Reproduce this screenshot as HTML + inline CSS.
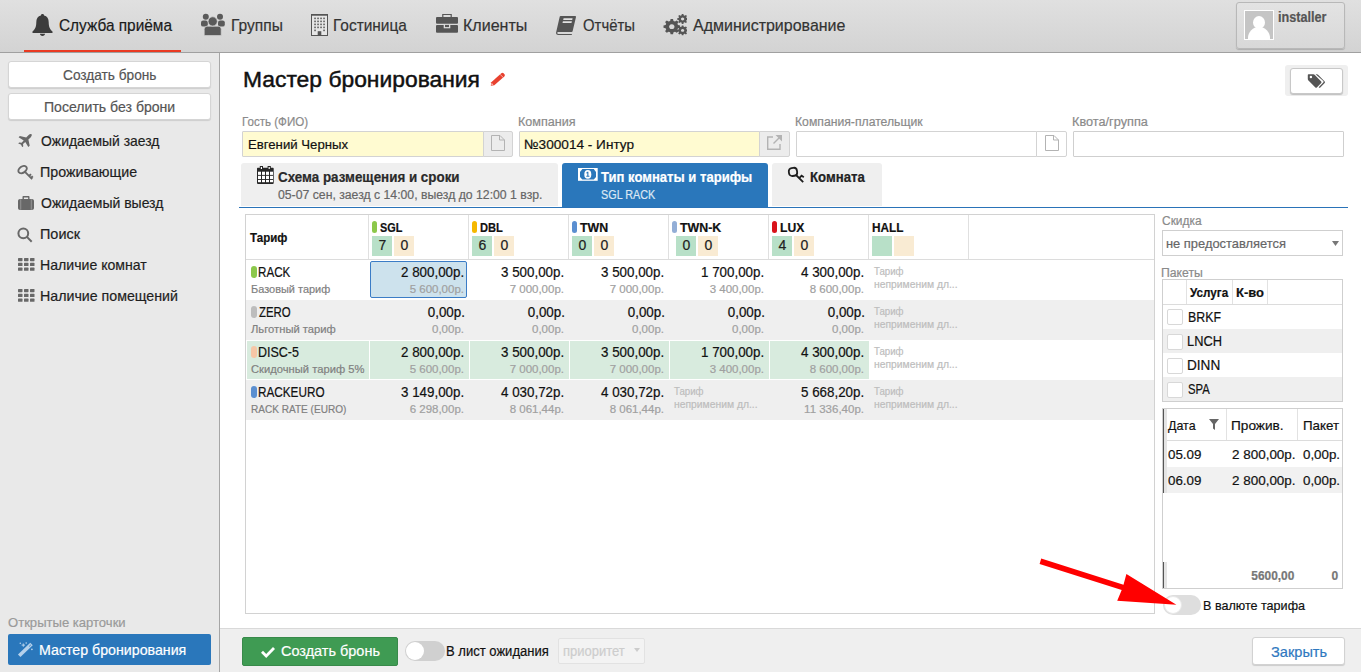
<!DOCTYPE html>
<html><head><meta charset="utf-8">
<style>
*{box-sizing:border-box;margin:0;padding:0}
html,body{width:1361px;height:672px;overflow:hidden;background:#fff;font-family:"Liberation Sans",sans-serif;color:#222}
.a{position:absolute}
.t{position:absolute;white-space:nowrap;-webkit-text-stroke:0.2px currentColor}
</style></head><body>
<div class="a" style="left:0px;top:0px;width:1361px;height:53px;background:linear-gradient(#e0e0e0,#d3d3d3);border-bottom:1px solid #a0a0a0"></div>
<div class="a" style="left:24px;top:50px;width:157px;height:2px;background:#ea3a22"></div>
<svg class="a" style="left:32px;top:14px" width="21" height="22" viewBox="0 0 21 22"><path fill="#3c3c3c" d="M10.5 0c1 0 1.6.7 1.6 1.6 3 .7 4.6 3.2 4.6 6.6 0 5 1.6 7.4 3.8 9.3V19H.5v-1.5c2.2-1.9 3.8-4.3 3.8-9.3 0-3.4 1.6-5.9 4.6-6.6C8.9.7 9.5 0 10.5 0zM8 19.8h5c0 1.3-1.1 2.2-2.5 2.2S8 21.1 8 19.8z"/></svg>
<div class="t" style="left:58.50px;transform-origin:0 0;top:17.00px;font-size:17px;line-height:17px;color:#1a1a1a;transform:scaleX(0.9060);">Служба приёма</div>
<svg class="a" style="left:200px;top:12px" width="26" height="25" viewBox="0 0 26 25"><g fill="#5a5a5a"><circle cx="5.8" cy="4.8" r="3"/><circle cx="20" cy="4.8" r="3"/><rect x="1" y="8.4" width="6.8" height="6.2" rx="2.2"/><rect x="18" y="8.4" width="6.8" height="6.2" rx="2.2"/></g><g fill="#5a5a5a" stroke="#d6d6d6" stroke-width=".7"><path d="M4.2 23.6V17.2c0-1.7 1.3-3 3-3h11c1.7 0 3 1.3 3 3v6.4z"/><circle cx="12.7" cy="9.4" r="4.6"/></g></svg>
<div class="t" style="left:230.89px;transform-origin:0 0;top:17.00px;font-size:17px;line-height:17px;color:#333;transform:scaleX(0.9147);">Группы</div>
<svg class="a" style="left:311px;top:14px" width="17" height="22" viewBox="0 0 17 22"><rect x=".5" y=".8" width="16" height="20.7" fill="#e6e6e6" stroke="#555" stroke-width="1"/><rect x="0" y="0" width="17" height="1.6" fill="#555"/><g fill="#666"><rect x="3.2" y="3.6" width="1.7" height="1.6"/><rect x="6.2" y="3.6" width="1.7" height="1.6"/><rect x="9.2" y="3.6" width="1.7" height="1.6"/><rect x="12.2" y="3.6" width="1.7" height="1.6"/><rect x="3.2" y="6.6" width="1.7" height="1.6"/><rect x="6.2" y="6.6" width="1.7" height="1.6"/><rect x="9.2" y="6.6" width="1.7" height="1.6"/><rect x="12.2" y="6.6" width="1.7" height="1.6"/><rect x="3.2" y="9.6" width="1.7" height="1.6"/><rect x="6.2" y="9.6" width="1.7" height="1.6"/><rect x="9.2" y="9.6" width="1.7" height="1.6"/><rect x="12.2" y="9.6" width="1.7" height="1.6"/><rect x="3.2" y="12.6" width="1.7" height="1.6"/><rect x="6.2" y="12.6" width="1.7" height="1.6"/><rect x="9.2" y="12.6" width="1.7" height="1.6"/><rect x="12.2" y="12.6" width="1.7" height="1.6"/><rect x="3.2" y="15.6" width="1.7" height="1.6"/><rect x="12.2" y="15.6" width="1.7" height="1.6"/></g><rect x="6.7" y="17.2" width="3.6" height="4.3" fill="#555"/></svg>
<div class="t" style="left:333.09px;transform-origin:0 0;top:17.00px;font-size:17px;line-height:17px;color:#333;transform:scaleX(0.9082);">Гостиница</div>
<svg class="a" style="left:436px;top:14px" width="22" height="19" viewBox="0 0 22 19"><g fill="#555"><path d="M6.2 0h9.6v3.2h-1.2V1.1H7.4v2.1H6.2z"/><rect x="0" y="3" width="22" height="6.7" rx="1"/><rect x="0" y="10.9" width="22" height="7.9" rx="1"/></g><path fill="#ddd" d="M7.7 10.9h6.6v3.4H7.7z"/><path fill="#555" d="M9 10.9h4v2.2H9z"/></svg>
<div class="t" style="left:463.36px;transform-origin:0 0;top:17.00px;font-size:17px;line-height:17px;color:#333;transform:scaleX(0.9440);">Клиенты</div>
<svg class="a" style="left:556px;top:16px" width="20" height="19" viewBox="0 0 20 19"><path fill="#555" d="M4.6 0H19.2c.5 0 .9.4.8.9L16.6 15.2c-.1.5-.5.8-1 .8H2.4c-.8 0-1.3.6-1.1 1.2.1.5.6.8 1.1.8H16l-.3 1H2.2C.9 19-.2 17.9.1 16.6L3.7.8C3.8.3 4.1 0 4.6 0z"/><path fill="#e2e2e2" d="M7.6 2.2h9l-.4 1.9h-9zM6.9 5.3h9l-.4 1.7h-9z"/></svg>
<div class="t" style="left:582.60px;transform-origin:0 0;top:17.00px;font-size:17px;line-height:17px;color:#333;transform:scaleX(0.8764);">Отчёты</div>
<svg class="a" style="left:662px;top:14px" width="25" height="22" viewBox="0 0 25 24" preserveAspectRatio="none"><g fill="#555"><path d="M8.6 5.5h2.4l.5 2.1 1.5.6 1.8-1.1 1.7 1.7-1.1 1.8.6 1.5 2.1.5v2.4l-2.1.5-.6 1.5 1.1 1.8-1.7 1.7-1.8-1.1-1.5.6-.5 2.1H8.6l-.5-2.1-1.5-.6-1.8 1.1-1.7-1.7 1.1-1.8-.6-1.5L1.5 15v-2.4l2.1-.5.6-1.5-1.1-1.8 1.7-1.7 1.8 1.1 1.5-.6zm1.2 5.6a2.7 2.7 0 1 0 .01 0z"/><path d="M19.8 0h1.6l.3 1.4 1 .4 1.2-.8 1.1 1.1-.8 1.2.4 1 1.4.3v1.6l-1.4.3-.4 1 .8 1.2-1.1 1.1-1.2-.8-1 .4-.3 1.4h-1.6l-.3-1.4-1-.4-1.2.8-1.1-1.1.8-1.2-.4-1-1.4-.3V4.6l1.4-.3.4-1-.8-1.2 1.1-1.1 1.2.8 1-.4zm.8 3.8a1.6 1.6 0 1 0 .01 0z"/><path d="M19.8 12.5h1.6l.3 1.4 1 .4 1.2-.8 1.1 1.1-.8 1.2.4 1 1.4.3v1.6l-1.4.3-.4 1 .8 1.2-1.1 1.1-1.2-.8-1 .4-.3 1.4h-1.6l-.3-1.4-1-.4-1.2.8-1.1-1.1.8-1.2-.4-1-1.4-.3v-1.6l1.4-.3.4-1-.8-1.2 1.1-1.1 1.2.8 1-.4zm.8 3.8a1.6 1.6 0 1 0 .01 0z"/></g></svg>
<div class="t" style="left:693.20px;transform-origin:0 0;top:17.00px;font-size:17px;line-height:17px;color:#333;transform:scaleX(0.9403);">Администрирование</div>
<div class="a" style="left:1236px;top:2px;width:109px;height:47px;border:1px solid #b8b8b8;border-radius:3px;background:linear-gradient(#e3e3e3,#d8d8d8);box-shadow:0 1px 1px rgba(0,0,0,.18)"></div>
<div class="a" style="left:1244px;top:10px;width:30px;height:30px;background:#fff"></div>
<div class="a" style="left:1245px;top:11px;width:28px;height:28px;background:#c5c5c5;overflow:hidden"><div class="a" style="left:8px;top:5px;width:12px;height:13px;border-radius:50%;background:#fff"></div><div class="a" style="left:3px;top:16px;width:22px;height:22px;border-radius:50%;background:#fff"></div></div>
<div class="t" style="left:1277.50px;transform-origin:0 0;top:10.00px;font-size:14px;line-height:14px;font-weight:bold;color:#555;transform:scaleX(0.9034);">installer</div>
<div class="a" style="left:0px;top:53px;width:220px;height:619px;background:#e9e9e9;border-right:1px solid #a6a6a6"></div>
<div class="a" style="left:8px;top:61px;width:203px;height:27px;background:#fff;border:1px solid #d5d5d5;border-radius:3px;box-shadow:0 1px 1px rgba(0,0,0,.12)"></div>
<div class="t" style="left:62.50px;transform-origin:0 0;top:68.00px;font-size:14px;line-height:14px;color:#555;transform:scaleX(0.9768);">Создать бронь</div>
<div class="a" style="left:8px;top:93px;width:203px;height:27px;background:#fff;border:1px solid #d5d5d5;border-radius:3px;box-shadow:0 1px 1px rgba(0,0,0,.12)"></div>
<div class="t" style="left:43.59px;transform-origin:0 0;top:100.00px;font-size:14px;line-height:14px;color:#555;transform:scaleX(1.0052);">Поселить без брони</div>
<div class="t" style="left:40.50px;transform-origin:0 0;top:134.00px;font-size:14.5px;line-height:14.5px;color:#1e1e1e;transform:scaleX(0.9599);">Ожидаемый заезд</div>
<div class="t" style="left:39.52px;transform-origin:0 0;top:165.00px;font-size:14.5px;line-height:14.5px;color:#1e1e1e;transform:scaleX(0.9837);">Проживающие</div>
<div class="t" style="left:40.50px;transform-origin:0 0;top:196.00px;font-size:14.5px;line-height:14.5px;color:#1e1e1e;transform:scaleX(0.9648);">Ожидаемый выезд</div>
<div class="t" style="left:39.51px;transform-origin:0 0;top:227.00px;font-size:14.5px;line-height:14.5px;color:#1e1e1e;transform:scaleX(0.9941);">Поиск</div>
<div class="t" style="left:39.53px;transform-origin:0 0;top:258.00px;font-size:14.5px;line-height:14.5px;color:#1e1e1e;transform:scaleX(0.9731);">Наличие комнат</div>
<div class="t" style="left:39.52px;transform-origin:0 0;top:289.00px;font-size:14.5px;line-height:14.5px;color:#1e1e1e;transform:scaleX(0.9797);">Наличие помещений</div>
<svg class="a" style="left:17px;top:134px" width="15" height="13" viewBox="0 0 15 13"><path fill="#686868" d="M14.6.4c.6.6.1 1.9-1 3L11.4 5.5l1.3 6.3-1.4 1.2-3-5.1-2.3 2.1.3 2.3-1 .9-1.4-2.6L1.2 9.4l1-1 2.4.4 2.1-2.4L1.6 3.3 2.9 2l6.3 1.4 2.2-2.1c1.1-1.1 2.6-1.5 3.2-.9z"/></svg>
<svg class="a" style="left:17px;top:165px" width="17" height="16" viewBox="0 0 17 16"><g fill="none" stroke="#686868" stroke-width="1.9"><ellipse cx="5.6" cy="4.6" rx="4.6" ry="3.1" transform="rotate(-35 5.6 4.6)"/><path d="M8.2 7.2l7 7M12 11l2-1.9M14 13l1.8-1.7"/></g><path stroke="#e9e9e9" stroke-width="1.3" d="M3.4 5.8L6.6 3.5"/></svg>
<svg class="a" style="left:18px;top:196px" width="16" height="14" viewBox="0 0 16 14"><path fill="#686868" d="M5.5 0h5c.6 0 1 .4 1 1v2H14c1.1 0 2 .9 2 2v7c0 1.1-.9 2-2 2H2c-1.1 0-2-.9-2-2V5c0-1.1.9-2 2-2h2.5V1c0-.6.4-1 1-1zm.4 1.4V3h4.2V1.4z"/><path fill="#9a9a9a" d="M2.3 3.3h.9v10.4h-.9zM12.8 3.3h.9v10.4h-.9z"/></svg>
<svg class="a" style="left:17px;top:227px" width="16" height="16" viewBox="0 0 16 16"><g fill="none" stroke="#686868" stroke-width="2"><circle cx="6.3" cy="6.3" r="4.9"/><path d="M9.9 9.9l4.8 4.8"/></g></svg>
<svg class="a" style="left:18px;top:258px" width="17" height="13" viewBox="0 0 17 13"><g fill="#686868"><rect x="0" y="0.0" width="4.5" height="3.2" rx=".6"/><rect x="6" y="0.0" width="4.5" height="3.2" rx=".6"/><rect x="12" y="0.0" width="4.5" height="3.2" rx=".6"/><rect x="0" y="4.8" width="4.5" height="3.2" rx=".6"/><rect x="6" y="4.8" width="4.5" height="3.2" rx=".6"/><rect x="12" y="4.8" width="4.5" height="3.2" rx=".6"/><rect x="0" y="9.6" width="4.5" height="3.2" rx=".6"/><rect x="6" y="9.6" width="4.5" height="3.2" rx=".6"/><rect x="12" y="9.6" width="4.5" height="3.2" rx=".6"/></g></svg>
<svg class="a" style="left:18px;top:289px" width="17" height="13" viewBox="0 0 17 13"><g fill="#686868"><rect x="0" y="0.0" width="4.5" height="3.2" rx=".6"/><rect x="6" y="0.0" width="4.5" height="3.2" rx=".6"/><rect x="12" y="0.0" width="4.5" height="3.2" rx=".6"/><rect x="0" y="4.8" width="4.5" height="3.2" rx=".6"/><rect x="6" y="4.8" width="4.5" height="3.2" rx=".6"/><rect x="12" y="4.8" width="4.5" height="3.2" rx=".6"/><rect x="0" y="9.6" width="4.5" height="3.2" rx=".6"/><rect x="6" y="9.6" width="4.5" height="3.2" rx=".6"/><rect x="12" y="9.6" width="4.5" height="3.2" rx=".6"/></g></svg>
<div class="t" style="left:8.30px;transform-origin:0 0;top:616.00px;font-size:13px;line-height:13px;color:#9a9a9a;transform:scaleX(1.0049);">Открытые карточки</div>
<div class="a" style="left:8px;top:634px;width:203px;height:31px;background:#2a77bb;border-radius:2px"></div>
<svg class="a" style="left:14px;top:638px" width="22" height="22" viewBox="0 0 22 22"><path stroke="#b5d1eb" stroke-width="3.6" d="M5.2 17.7L17.5 6"/><path stroke="#2a77bb" stroke-width="1" d="M15.3 8.3l1.4-1.3"/><g fill="#b5d1eb"><path d="M8.8 5.4h1v3.4h-1z"/><path d="M7.6 6.6h3.4v1H7.6z"/><circle cx="6.3" cy="5.3" r=".8"/><circle cx="12.2" cy="5" r=".8"/><circle cx="17.9" cy="11.3" r=".9"/></g></svg>
<div class="t" style="left:39.32px;transform-origin:0 0;top:643.00px;font-size:14.5px;line-height:14.5px;color:#fff;transform:scaleX(0.9793);">Мастер бронирования</div>
<div class="t" style="left:242.66px;transform-origin:0 0;top:69.00px;font-size:22px;line-height:22px;color:#111;transform:scaleX(1.0384);-webkit-text-stroke:0.45px #111;">Мастер бронирования</div>
<svg class="a" style="left:489px;top:72px" width="17" height="15" viewBox="0 0 17 15"><path fill="#e8412f" d="M1.8 13.8L2.3 10.3 12.3 1.2Q13.5.2 14.6 1.3L15.6 2.6Q16.3 3.7 15.3 4.6L5.3 13.3Z"/><path stroke="#f7c9c2" stroke-width=".8" d="M11.1 2.4l3.2 3.1"/><path fill="#fbe3df" d="M2.4 12.9l.3-1.8 1.6 1.4z"/></svg>
<div class="a" style="left:1285px;top:65px;width:63px;height:31px;background:#efefef;border-radius:3px"></div>
<div class="a" style="left:1290px;top:68px;width:53px;height:26px;background:#fff;border:1px solid #c8c8c8;border-radius:3px;box-shadow:0 1px 1px rgba(0,0,0,.2)"></div>
<svg class="a" style="left:1307px;top:73px" width="19" height="16" viewBox="0 0 19 16"><path fill="#555" d="M1.8 1.2h4.6c.5 0 .9.2 1.2.5l6.6 6.8c.4.4.4 1 0 1.4l-4.4 4.6c-.4.4-1 .4-1.4 0L1.2 7.2C.9 6.9.8 6.5.8 6.1V2.2c0-.6.4-1 1-1z"/><circle cx="3.9" cy="4" r="1.2" fill="#fff"/><path fill="#555" d="M8.6 1.2h1.3c.5 0 .9.2 1.2.5l6.6 6.8c.4.4.4 1 0 1.4l-4.4 4.6c-.4.4-1 .4-1.4 0l-.2-.2 4.6-4.8c.4-.4.4-1 0-1.4z"/></svg>
<div class="t" style="left:241.67px;transform-origin:0 0;top:116.00px;font-size:12.5px;line-height:12.5px;color:#8a8a8a;transform:scaleX(0.9257);">Гость (ФИО)</div>
<div class="t" style="left:518.19px;transform-origin:0 0;top:116.00px;font-size:12.5px;line-height:12.5px;color:#8a8a8a;transform:scaleX(1.0066);">Компания</div>
<div class="t" style="left:795.22px;transform-origin:0 0;top:116.00px;font-size:12.5px;line-height:12.5px;color:#8a8a8a;transform:scaleX(0.9762);">Компания-плательщик</div>
<div class="t" style="left:1072.28px;transform-origin:0 0;top:116.00px;font-size:12.5px;line-height:12.5px;color:#8a8a8a;transform:scaleX(1.0173);">Квота/группа</div>
<div class="a" style="left:242px;top:131px;width:242px;height:26px;background:#fffbd1;border:1px solid #d3d3d3;border-radius:1px"></div>
<div class="a" style="left:483px;top:131px;width:30px;height:26px;background:#ececec;border:1px solid #d3d3d3;border-radius:0 2px 2px 0"></div>
<div class="a" style="left:519px;top:131px;width:241px;height:26px;background:#fffbd1;border:1px solid #d3d3d3;border-radius:1px"></div>
<div class="a" style="left:759px;top:131px;width:31px;height:26px;background:#ececec;border:1px solid #d3d3d3;border-radius:0 2px 2px 0"></div>
<div class="a" style="left:796px;top:131px;width:241px;height:26px;background:#fff;border:1px solid #d3d3d3;border-radius:1px"></div>
<div class="a" style="left:1036px;top:131px;width:31px;height:26px;background:#fff;border:1px solid #d3d3d3;border-radius:0 2px 2px 0"></div>
<div class="a" style="left:1073px;top:131px;width:271px;height:26px;background:#fff;border:1px solid #cfcfcf;border-radius:1px"></div>
<div class="t" style="left:247.72px;transform-origin:0 0;top:138.00px;font-size:13.5px;line-height:13.5px;color:#111;transform:scaleX(0.9757);">Евгений Черных</div>
<div class="t" style="left:524.49px;transform-origin:0 0;top:138.00px;font-size:13.5px;line-height:13.5px;color:#111;transform:scaleX(1.0082);">№300014 - Интур</div>
<svg class="a" style="left:491px;top:135px" width="14" height="16" viewBox="0 0 14 16"><path fill="none" stroke="#b3b3b3" stroke-width="1" d="M.5.5h8.5l4.5 4.5v10.5H.5z M8.5.5v4.5h5"/></svg>
<svg class="a" style="left:1045px;top:135px" width="14" height="16" viewBox="0 0 14 16"><path fill="none" stroke="#b3b3b3" stroke-width="1" d="M.5.5h8.5l4.5 4.5v10.5H.5z M8.5.5v4.5h5"/></svg>
<svg class="a" style="left:766px;top:134px" width="17" height="17" viewBox="0 0 17 17"><g fill="none" stroke="#b3b3b3" stroke-width="1.4"><path d="M7 3H1.7v12.3H14V10"/><path d="M14.5 2.5L7.5 9.5"/></g><path fill="#b3b3b3" d="M9.5 1h6.5v6.5z"/></svg>
<div class="a" style="left:241px;top:163px;width:317px;height:43px;background:#efefef;border-radius:3px 3px 0 0"></div>
<div class="a" style="left:562px;top:163px;width:206px;height:44px;background:#2a77bb;border-radius:3px 3px 0 0"></div>
<div class="a" style="left:772px;top:163px;width:110px;height:43px;background:#efefef;border-radius:3px 3px 0 0"></div>
<div class="a" style="left:239px;top:207px;width:1109px;height:1px;background:#2a73b8"></div>
<svg class="a" style="left:257px;top:166px" width="17" height="18" viewBox="0 0 17 18"><path fill="#262626" d="M2.8 0h3.2v1.8h4.6V0h3.2v1.8h1.9c.6 0 1 .4 1 1V17c0 .6-.4.9-1 .9H1c-.6 0-1-.3-1-.9V2.8c0-.6.4-1 1-1h1.8z"/><g fill="#fff"><rect x="1" y="5.7" width="3" height="3.2"/><rect x="5" y="5.7" width="3" height="3.2"/><rect x="9" y="5.7" width="3" height="3.2"/><rect x="13" y="5.7" width="3" height="3.2"/><rect x="1" y="9.8" width="3" height="3.2"/><rect x="5" y="9.8" width="3" height="3.2"/><rect x="9" y="9.8" width="3" height="3.2"/><rect x="13" y="9.8" width="3" height="3.2"/><rect x="1" y="13.9" width="3" height="2.3"/><rect x="5" y="13.9" width="3" height="2.3"/><rect x="9" y="13.9" width="3" height="2.3"/><rect x="13" y="13.9" width="3" height="2.3"/><rect x="3.8" y="1" width="1.2" height="2"/><rect x="11.6" y="1" width="1.2" height="2"/></g></svg>
<div class="t" style="left:278.00px;transform-origin:0 0;top:170.00px;font-size:14px;line-height:14px;font-weight:bold;color:#2a2a2a;transform:scaleX(0.9558);">Схема размещения и сроки</div>
<div class="t" style="left:278.00px;transform-origin:0 0;top:189.00px;font-size:12.5px;line-height:12.5px;color:#666;transform:scaleX(0.9791);">05-07 сен, заезд с 14:00, выезд до 12:00 1 взр.</div>
<svg class="a" style="left:578px;top:168px" width="20" height="13" viewBox="0 0 20 13"><rect width="19.7" height="12.8" fill="#fff"/><path fill="#2a77bb" d="M4.3 1.1h11.5L18 3.9v5L15.8 11.6H4.3L2 8.9v-5z"/><ellipse cx="9.8" cy="6.4" rx="3.5" ry="4.4" fill="#fff"/><path fill="#2a77bb" d="M9.3 3.8h1.1v4h1v.9H8.3v-.9h1v-2.6l-.8.4-.3-.8z"/></svg>
<div class="t" style="left:601.40px;transform-origin:0 0;top:170.00px;font-size:14px;line-height:14px;font-weight:bold;color:#fff;transform:scaleX(0.9341);">Тип комнаты и тарифы</div>
<div class="t" style="left:601.40px;transform-origin:0 0;top:189.00px;font-size:12.5px;line-height:12.5px;color:#dce8f4;transform:scaleX(0.8657);">SGL RACK</div>
<svg class="a" style="left:787px;top:166px" width="18" height="18" viewBox="0 0 18 18"><g fill="none" stroke="#1e1e1e" stroke-width="1.8"><rect x="1.9" y="1.9" width="8.2" height="8" rx="3.2" transform="rotate(-8 6 6)"/><path d="M9 9l7.2 7.2M12.2 12.2l2.4-2.6 2.2 1.6"/></g></svg>
<div class="t" style="left:810.00px;transform-origin:0 0;top:170.00px;font-size:14px;line-height:14px;font-weight:bold;color:#222;transform:scaleX(0.9423);">Комната</div>
<div class="a" style="left:245px;top:214px;width:910px;height:400px;border:1px solid #d2d2d2;background:#fff"></div>
<div class="a" style="left:246px;top:259px;width:908px;height:1px;background:#dcdcdc"></div>
<div class="a" style="left:368px;top:215px;width:1px;height:44px;background:#e0e0e0"></div>
<div class="a" style="left:468px;top:215px;width:1px;height:44px;background:#e0e0e0"></div>
<div class="a" style="left:568px;top:215px;width:1px;height:44px;background:#e0e0e0"></div>
<div class="a" style="left:668px;top:215px;width:1px;height:44px;background:#e0e0e0"></div>
<div class="a" style="left:768px;top:215px;width:1px;height:44px;background:#e0e0e0"></div>
<div class="a" style="left:868px;top:215px;width:1px;height:44px;background:#e0e0e0"></div>
<div class="a" style="left:968px;top:215px;width:1px;height:44px;background:#e0e0e0"></div>
<div class="t" style="left:249.70px;transform-origin:0 0;top:231.00px;font-size:13px;line-height:13px;font-weight:bold;color:#111;transform:scaleX(0.8856);">Тариф</div>
<div class="a" style="left:372px;top:221px;width:5px;height:12px;background:#8cc84b;border-radius:2.5px"></div>
<div class="t" style="left:380.00px;transform-origin:0 0;top:221.00px;font-size:13px;line-height:13px;font-weight:bold;color:#111;transform:scaleX(0.8364);">SGL</div>
<div class="a" style="left:372px;top:236px;width:20px;height:20px;background:#b8e0c8"></div>
<div class="a" style="left:394px;top:236px;width:20px;height:20px;background:#f9ebd3"></div>
<div class="t" style="left:378.50px;transform-origin:0 0;top:238.00px;font-size:14px;line-height:14px;color:#222;">7</div>
<div class="t" style="left:400.50px;transform-origin:0 0;top:238.00px;font-size:14px;line-height:14px;color:#222;">0</div>
<div class="a" style="left:472px;top:221px;width:5px;height:12px;background:#f5b800;border-radius:2.5px"></div>
<div class="t" style="left:480.00px;transform-origin:0 0;top:221.00px;font-size:13px;line-height:13px;font-weight:bold;color:#111;transform:scaleX(0.8552);">DBL</div>
<div class="a" style="left:472px;top:236px;width:20px;height:20px;background:#b8e0c8"></div>
<div class="a" style="left:494px;top:236px;width:20px;height:20px;background:#f9ebd3"></div>
<div class="t" style="left:478.50px;transform-origin:0 0;top:238.00px;font-size:14px;line-height:14px;color:#222;">6</div>
<div class="t" style="left:500.50px;transform-origin:0 0;top:238.00px;font-size:14px;line-height:14px;color:#222;">0</div>
<div class="a" style="left:572px;top:221px;width:5px;height:12px;background:#5b8fd0;border-radius:2.5px"></div>
<div class="t" style="left:580.00px;transform-origin:0 0;top:221.00px;font-size:13px;line-height:13px;font-weight:bold;color:#111;transform:scaleX(0.9517);">TWN</div>
<div class="a" style="left:572px;top:236px;width:20px;height:20px;background:#b8e0c8"></div>
<div class="a" style="left:594px;top:236px;width:20px;height:20px;background:#f9ebd3"></div>
<div class="t" style="left:578.50px;transform-origin:0 0;top:238.00px;font-size:14px;line-height:14px;color:#222;">0</div>
<div class="t" style="left:600.50px;transform-origin:0 0;top:238.00px;font-size:14px;line-height:14px;color:#222;">0</div>
<div class="a" style="left:672px;top:221px;width:5px;height:12px;background:#93aed6;border-radius:2.5px"></div>
<div class="t" style="left:680.00px;transform-origin:0 0;top:221.00px;font-size:13px;line-height:13px;font-weight:bold;color:#111;transform:scaleX(0.9538);">TWN-K</div>
<div class="a" style="left:676px;top:236px;width:20px;height:20px;background:#b8e0c8"></div>
<div class="a" style="left:698px;top:236px;width:20px;height:20px;background:#f9ebd3"></div>
<div class="t" style="left:682.50px;transform-origin:0 0;top:238.00px;font-size:14px;line-height:14px;color:#222;">0</div>
<div class="t" style="left:704.50px;transform-origin:0 0;top:238.00px;font-size:14px;line-height:14px;color:#222;">0</div>
<div class="a" style="left:772px;top:221px;width:5px;height:12px;background:#d9131b;border-radius:2.5px"></div>
<div class="t" style="left:780.00px;transform-origin:0 0;top:221.00px;font-size:13px;line-height:13px;font-weight:bold;color:#111;transform:scaleX(0.9343);">LUX</div>
<div class="a" style="left:772px;top:236px;width:20px;height:20px;background:#b8e0c8"></div>
<div class="a" style="left:794px;top:236px;width:20px;height:20px;background:#f9ebd3"></div>
<div class="t" style="left:778.50px;transform-origin:0 0;top:238.00px;font-size:14px;line-height:14px;color:#222;">4</div>
<div class="t" style="left:800.50px;transform-origin:0 0;top:238.00px;font-size:14px;line-height:14px;color:#222;">0</div>
<div class="t" style="left:872.30px;transform-origin:0 0;top:221.00px;font-size:13px;line-height:13px;font-weight:bold;color:#111;transform:scaleX(0.9073);">HALL</div>
<div class="a" style="left:872px;top:236px;width:20px;height:20px;background:#b8e0c8"></div>
<div class="a" style="left:894px;top:236px;width:20px;height:20px;background:#f9ebd3"></div>
<div class="a" style="left:246px;top:300px;width:908px;height:40px;background:#efefef"></div>
<div class="a" style="left:246px;top:380px;width:908px;height:40px;background:#efefef"></div>
<div class="a" style="left:247px;top:341px;width:122px;height:38px;background:#d8ebde"></div>
<div class="a" style="left:370px;top:341px;width:99px;height:38px;background:#d8ebde"></div>
<div class="a" style="left:470px;top:341px;width:99px;height:38px;background:#d8ebde"></div>
<div class="a" style="left:570px;top:341px;width:99px;height:38px;background:#d8ebde"></div>
<div class="a" style="left:670px;top:341px;width:99px;height:38px;background:#d8ebde"></div>
<div class="a" style="left:770px;top:341px;width:99px;height:38px;background:#d8ebde"></div>
<div class="a" style="left:370px;top:261px;width:97px;height:37px;background:#cde2ed;border:1px solid #3b7cc6;border-radius:2px"></div>
<div class="a" style="left:251px;top:266px;width:6px;height:12px;background:#8cc84b;border-radius:3px"></div>
<div class="t" style="left:258.37px;transform-origin:0 0;top:265.00px;font-size:14px;line-height:14px;color:#111;transform:scaleX(0.8299);">RACK</div>
<div class="t" style="left:251.20px;transform-origin:0 0;top:284.00px;font-size:11.5px;line-height:11.5px;color:#808080;transform:scaleX(0.9528);">Базовый тариф</div>
<div class="t" style="right:896.35px;text-align:right;transform-origin:100% 0;top:265.00px;font-size:14px;line-height:14px;color:#111;transform:scaleX(0.9541);">2 800,00р.</div>
<div class="t" style="right:897.00px;text-align:right;transform-origin:100% 0;top:284.00px;font-size:11.5px;line-height:11.5px;color:#a0a0a0;">5 600,00р.</div>
<div class="t" style="right:796.35px;text-align:right;transform-origin:100% 0;top:265.00px;font-size:14px;line-height:14px;color:#111;transform:scaleX(0.9541);">3 500,00р.</div>
<div class="t" style="right:797.00px;text-align:right;transform-origin:100% 0;top:284.00px;font-size:11.5px;line-height:11.5px;color:#a0a0a0;">7 000,00р.</div>
<div class="t" style="right:696.35px;text-align:right;transform-origin:100% 0;top:265.00px;font-size:14px;line-height:14px;color:#111;transform:scaleX(0.9541);">3 500,00р.</div>
<div class="t" style="right:697.00px;text-align:right;transform-origin:100% 0;top:284.00px;font-size:11.5px;line-height:11.5px;color:#a0a0a0;">7 000,00р.</div>
<div class="t" style="right:596.35px;text-align:right;transform-origin:100% 0;top:265.00px;font-size:14px;line-height:14px;color:#111;transform:scaleX(0.9541);">1 700,00р.</div>
<div class="t" style="right:597.00px;text-align:right;transform-origin:100% 0;top:284.00px;font-size:11.5px;line-height:11.5px;color:#a0a0a0;">3 400,00р.</div>
<div class="t" style="right:496.35px;text-align:right;transform-origin:100% 0;top:265.00px;font-size:14px;line-height:14px;color:#111;transform:scaleX(0.9541);">4 300,00р.</div>
<div class="t" style="right:497.00px;text-align:right;transform-origin:100% 0;top:284.00px;font-size:11.5px;line-height:11.5px;color:#a0a0a0;">8 600,00р.</div>
<div class="t" style="left:874.30px;transform-origin:0 0;top:266.00px;font-size:11px;line-height:11px;color:#bdbdbd;transform:scaleX(0.8778);">Тариф</div>
<div class="t" style="left:874.30px;transform-origin:0 0;top:279.00px;font-size:11px;line-height:11px;color:#bdbdbd;transform:scaleX(0.9395);">неприменим дл...</div>
<div class="a" style="left:251px;top:306px;width:6px;height:12px;background:#bdbdbd;border-radius:3px"></div>
<div class="t" style="left:259.20px;transform-origin:0 0;top:305.00px;font-size:14px;line-height:14px;color:#111;transform:scaleX(0.8154);">ZERO</div>
<div class="t" style="left:251.20px;transform-origin:0 0;top:324.00px;font-size:11.5px;line-height:11.5px;color:#808080;transform:scaleX(0.9760);">Льготный тариф</div>
<div class="t" style="right:896.35px;text-align:right;transform-origin:100% 0;top:305.00px;font-size:14px;line-height:14px;color:#111;transform:scaleX(0.9541);">0,00р.</div>
<div class="t" style="right:897.00px;text-align:right;transform-origin:100% 0;top:324.00px;font-size:11.5px;line-height:11.5px;color:#a0a0a0;">0,00р.</div>
<div class="t" style="right:796.35px;text-align:right;transform-origin:100% 0;top:305.00px;font-size:14px;line-height:14px;color:#111;transform:scaleX(0.9541);">0,00р.</div>
<div class="t" style="right:797.00px;text-align:right;transform-origin:100% 0;top:324.00px;font-size:11.5px;line-height:11.5px;color:#a0a0a0;">0,00р.</div>
<div class="t" style="right:696.35px;text-align:right;transform-origin:100% 0;top:305.00px;font-size:14px;line-height:14px;color:#111;transform:scaleX(0.9541);">0,00р.</div>
<div class="t" style="right:697.00px;text-align:right;transform-origin:100% 0;top:324.00px;font-size:11.5px;line-height:11.5px;color:#a0a0a0;">0,00р.</div>
<div class="t" style="right:596.35px;text-align:right;transform-origin:100% 0;top:305.00px;font-size:14px;line-height:14px;color:#111;transform:scaleX(0.9541);">0,00р.</div>
<div class="t" style="right:597.00px;text-align:right;transform-origin:100% 0;top:324.00px;font-size:11.5px;line-height:11.5px;color:#a0a0a0;">0,00р.</div>
<div class="t" style="right:496.35px;text-align:right;transform-origin:100% 0;top:305.00px;font-size:14px;line-height:14px;color:#111;transform:scaleX(0.9541);">0,00р.</div>
<div class="t" style="right:497.00px;text-align:right;transform-origin:100% 0;top:324.00px;font-size:11.5px;line-height:11.5px;color:#a0a0a0;">0,00р.</div>
<div class="t" style="left:874.30px;transform-origin:0 0;top:306.00px;font-size:11px;line-height:11px;color:#bdbdbd;transform:scaleX(0.8778);">Тариф</div>
<div class="t" style="left:874.30px;transform-origin:0 0;top:319.00px;font-size:11px;line-height:11px;color:#bdbdbd;transform:scaleX(0.9395);">неприменим дл...</div>
<div class="a" style="left:251px;top:346px;width:6px;height:12px;background:#f6c6a6;border-radius:3px"></div>
<div class="t" style="left:258.31px;transform-origin:0 0;top:345.00px;font-size:14px;line-height:14px;color:#111;transform:scaleX(0.8911);">DISC-5</div>
<div class="t" style="left:251.20px;transform-origin:0 0;top:364.00px;font-size:11.5px;line-height:11.5px;color:#808080;transform:scaleX(0.9738);">Скидочный тариф 5%</div>
<div class="t" style="right:896.35px;text-align:right;transform-origin:100% 0;top:345.00px;font-size:14px;line-height:14px;color:#111;transform:scaleX(0.9541);">2 800,00р.</div>
<div class="t" style="right:897.00px;text-align:right;transform-origin:100% 0;top:364.00px;font-size:11.5px;line-height:11.5px;color:#a0a0a0;">5 600,00р.</div>
<div class="t" style="right:796.35px;text-align:right;transform-origin:100% 0;top:345.00px;font-size:14px;line-height:14px;color:#111;transform:scaleX(0.9541);">3 500,00р.</div>
<div class="t" style="right:797.00px;text-align:right;transform-origin:100% 0;top:364.00px;font-size:11.5px;line-height:11.5px;color:#a0a0a0;">7 000,00р.</div>
<div class="t" style="right:696.35px;text-align:right;transform-origin:100% 0;top:345.00px;font-size:14px;line-height:14px;color:#111;transform:scaleX(0.9541);">3 500,00р.</div>
<div class="t" style="right:697.00px;text-align:right;transform-origin:100% 0;top:364.00px;font-size:11.5px;line-height:11.5px;color:#a0a0a0;">7 000,00р.</div>
<div class="t" style="right:596.35px;text-align:right;transform-origin:100% 0;top:345.00px;font-size:14px;line-height:14px;color:#111;transform:scaleX(0.9541);">1 700,00р.</div>
<div class="t" style="right:597.00px;text-align:right;transform-origin:100% 0;top:364.00px;font-size:11.5px;line-height:11.5px;color:#a0a0a0;">3 400,00р.</div>
<div class="t" style="right:496.35px;text-align:right;transform-origin:100% 0;top:345.00px;font-size:14px;line-height:14px;color:#111;transform:scaleX(0.9541);">4 300,00р.</div>
<div class="t" style="right:497.00px;text-align:right;transform-origin:100% 0;top:364.00px;font-size:11.5px;line-height:11.5px;color:#a0a0a0;">8 600,00р.</div>
<div class="t" style="left:874.30px;transform-origin:0 0;top:346.00px;font-size:11px;line-height:11px;color:#bdbdbd;transform:scaleX(0.8778);">Тариф</div>
<div class="t" style="left:874.30px;transform-origin:0 0;top:359.00px;font-size:11px;line-height:11px;color:#bdbdbd;transform:scaleX(0.9395);">неприменим дл...</div>
<div class="a" style="left:251px;top:386px;width:6px;height:12px;background:#5b8fd0;border-radius:3px"></div>
<div class="t" style="left:258.36px;transform-origin:0 0;top:385.00px;font-size:14px;line-height:14px;color:#111;transform:scaleX(0.8387);">RACKEURO</div>
<div class="t" style="left:251.20px;transform-origin:0 0;top:404.00px;font-size:11.5px;line-height:11.5px;color:#808080;transform:scaleX(0.8744);">RACK RATE (EURO)</div>
<div class="t" style="right:896.35px;text-align:right;transform-origin:100% 0;top:385.00px;font-size:14px;line-height:14px;color:#111;transform:scaleX(0.9541);">3 149,00р.</div>
<div class="t" style="right:897.00px;text-align:right;transform-origin:100% 0;top:404.00px;font-size:11.5px;line-height:11.5px;color:#a0a0a0;">6 298,00р.</div>
<div class="t" style="right:796.35px;text-align:right;transform-origin:100% 0;top:385.00px;font-size:14px;line-height:14px;color:#111;transform:scaleX(0.9541);">4 030,72р.</div>
<div class="t" style="right:797.00px;text-align:right;transform-origin:100% 0;top:404.00px;font-size:11.5px;line-height:11.5px;color:#a0a0a0;">8 061,44р.</div>
<div class="t" style="right:696.35px;text-align:right;transform-origin:100% 0;top:385.00px;font-size:14px;line-height:14px;color:#111;transform:scaleX(0.9541);">4 030,72р.</div>
<div class="t" style="right:697.00px;text-align:right;transform-origin:100% 0;top:404.00px;font-size:11.5px;line-height:11.5px;color:#a0a0a0;">8 061,44р.</div>
<div class="t" style="left:674.30px;transform-origin:0 0;top:386.00px;font-size:11px;line-height:11px;color:#bdbdbd;transform:scaleX(0.8778);">Тариф</div>
<div class="t" style="left:674.30px;transform-origin:0 0;top:399.00px;font-size:11px;line-height:11px;color:#bdbdbd;transform:scaleX(0.9395);">неприменим дл...</div>
<div class="t" style="right:496.35px;text-align:right;transform-origin:100% 0;top:385.00px;font-size:14px;line-height:14px;color:#111;transform:scaleX(0.9541);">5 668,20р.</div>
<div class="t" style="right:497.00px;text-align:right;transform-origin:100% 0;top:404.00px;font-size:11.5px;line-height:11.5px;color:#a0a0a0;">11 336,40р.</div>
<div class="t" style="left:874.30px;transform-origin:0 0;top:386.00px;font-size:11px;line-height:11px;color:#bdbdbd;transform:scaleX(0.8778);">Тариф</div>
<div class="t" style="left:874.30px;transform-origin:0 0;top:399.00px;font-size:11px;line-height:11px;color:#bdbdbd;transform:scaleX(0.9395);">неприменим дл...</div>
<div class="t" style="left:1162.30px;transform-origin:0 0;top:215.00px;font-size:12.5px;line-height:12.5px;color:#8a8a8a;transform:scaleX(0.9563);">Скидка</div>
<div class="a" style="left:1162px;top:230px;width:181px;height:26px;border:1px solid #cfcfcf;background:#fff"></div>
<div class="t" style="left:1166.00px;transform-origin:0 0;top:237.00px;font-size:13.5px;line-height:13.5px;color:#666;transform:scaleX(0.9544);">не предоставляется</div>
<svg class="a" style="left:1332px;top:241px" width="7" height="5" viewBox="0 0 7 5"><path fill="#777" d="M0 0h7L3.5 5z"/></svg>
<div class="t" style="left:1161.32px;transform-origin:0 0;top:267.00px;font-size:12.5px;line-height:12.5px;color:#8a8a8a;transform:scaleX(0.9783);">Пакеты</div>
<div class="a" style="left:1162px;top:279px;width:181px;height:123px;border:1px solid #cfcfcf;background:#fff"></div>
<div class="a" style="left:1163px;top:304px;width:179px;height:1px;background:#dcdcdc"></div>
<div class="a" style="left:1186px;top:280px;width:1px;height:24px;background:#e2e2e2"></div>
<div class="a" style="left:1232px;top:280px;width:1px;height:24px;background:#e2e2e2"></div>
<div class="a" style="left:1267px;top:280px;width:1px;height:24px;background:#e2e2e2"></div>
<div class="t" style="left:1190.00px;transform-origin:0 0;top:286.00px;font-size:13px;line-height:13px;font-weight:bold;color:#111;transform:scaleX(0.8998);">Услуга</div>
<div class="t" style="left:1236.00px;transform-origin:0 0;top:286.00px;font-size:13px;line-height:13px;font-weight:bold;color:#111;transform:scaleX(0.9970);">К-во</div>
<div class="a" style="left:1167px;top:309px;width:16px;height:16px;background:#fff;border:1px solid #d8d8d8;border-radius:2px"></div>
<div class="t" style="left:1187.52px;transform-origin:0 0;top:310.00px;font-size:14px;line-height:14px;color:#111;transform:scaleX(0.8830);">BRKF</div>
<div class="a" style="left:1163px;top:329px;width:179px;height:24px;background:#efefef"></div>
<div class="a" style="left:1167px;top:334px;width:16px;height:16px;background:#fff;border:1px solid #d8d8d8;border-radius:2px"></div>
<div class="t" style="left:1187.48px;transform-origin:0 0;top:334.00px;font-size:14px;line-height:14px;color:#111;transform:scaleX(0.9165);">LNCH</div>
<div class="a" style="left:1167px;top:358px;width:16px;height:16px;background:#fff;border:1px solid #d8d8d8;border-radius:2px"></div>
<div class="t" style="left:1187.43px;transform-origin:0 0;top:358.00px;font-size:14px;line-height:14px;color:#111;transform:scaleX(0.9716);">DINN</div>
<div class="a" style="left:1163px;top:377px;width:179px;height:24px;background:#efefef"></div>
<div class="a" style="left:1167px;top:382px;width:16px;height:16px;background:#fff;border:1px solid #d8d8d8;border-radius:2px"></div>
<div class="t" style="left:1188.40px;transform-origin:0 0;top:382.00px;font-size:14px;line-height:14px;color:#111;transform:scaleX(0.8069);">SPA</div>
<div class="a" style="left:1162px;top:408px;width:181px;height:181px;border:1px solid #cfcfcf;background:#fff"></div>
<div class="a" style="left:1163px;top:467px;width:179px;height:26px;background:#f1f1f1"></div>
<div class="a" style="left:1163px;top:440px;width:179px;height:1px;background:#dcdcdc"></div>
<div class="a" style="left:1226px;top:409px;width:1px;height:31px;background:#e2e2e2"></div>
<div class="a" style="left:1297px;top:409px;width:1px;height:31px;background:#e2e2e2"></div>
<div class="a" style="left:1163px;top:409px;width:1px;height:84px;background:#555"></div>
<div class="a" style="left:1164px;top:409px;width:3px;height:84px;background:#e4e4e4"></div>
<div class="a" style="left:1163px;top:562px;width:1px;height:26px;background:#555"></div>
<div class="a" style="left:1164px;top:562px;width:3px;height:26px;background:#e4e4e4"></div>
<div class="t" style="left:1168.00px;transform-origin:0 0;top:419.00px;font-size:13.5px;line-height:13.5px;color:#111;transform:scaleX(0.9215);">Дата</div>
<svg class="a" style="left:1209px;top:419px" width="10" height="11" viewBox="0 0 10 11"><path fill="#666" d="M0 0h10L6 5v6L4 9.5V5z"/></svg>
<div class="t" style="left:1231.19px;transform-origin:0 0;top:419.00px;font-size:13.5px;line-height:13.5px;color:#111;transform:scaleX(1.0097);">Прожив.</div>
<div class="t" style="left:1302.51px;transform-origin:0 0;top:419.00px;font-size:13.5px;line-height:13.5px;color:#111;transform:scaleX(0.9879);">Пакет</div>
<div class="t" style="left:1168.00px;transform-origin:0 0;top:448.00px;font-size:13.5px;line-height:13.5px;color:#111;transform:scaleX(0.9887);">05.09</div>
<div class="t" style="left:1232.20px;transform-origin:0 0;top:448.00px;font-size:13.5px;line-height:13.5px;color:#111;transform:scaleX(0.9959);">2 800,00р.</div>
<div class="t" style="left:1302.70px;transform-origin:0 0;top:448.00px;font-size:13.5px;line-height:13.5px;color:#111;transform:scaleX(0.9869);">0,00р.</div>
<div class="t" style="left:1168.00px;transform-origin:0 0;top:474.00px;font-size:13.5px;line-height:13.5px;color:#111;transform:scaleX(0.9887);">06.09</div>
<div class="t" style="left:1232.20px;transform-origin:0 0;top:474.00px;font-size:13.5px;line-height:13.5px;color:#111;transform:scaleX(0.9959);">2 800,00р.</div>
<div class="t" style="left:1302.70px;transform-origin:0 0;top:474.00px;font-size:13.5px;line-height:13.5px;color:#111;transform:scaleX(0.9869);">0,00р.</div>
<div class="t" style="right:67.12px;text-align:right;transform-origin:100% 0;top:570.00px;font-size:12px;line-height:12px;font-weight:bold;color:#777;transform:scaleX(0.9931);">5600,00</div>
<div class="t" style="right:22.93px;text-align:right;transform-origin:100% 0;top:570.00px;font-size:12px;line-height:12px;font-weight:bold;color:#777;">0</div>
<div class="a" style="left:1163px;top:595px;width:38px;height:20px;background:#dedede;border-radius:10px"></div>
<div class="a" style="left:1164px;top:596px;width:18px;height:18px;background:#fff;border-radius:50%;border:1px solid #e8e8e8"></div>
<div class="t" style="left:1203.37px;transform-origin:0 0;top:599.00px;font-size:13.5px;line-height:13.5px;color:#111;transform:scaleX(0.9314);">В валюте тарифа</div>
<svg class="a" style="left:0px;top:0px" width="1361" height="672" viewBox="0 0 1361 672"><polygon fill="#ff0000" points="1041.2,558.5 1123.5,584.8 1126.4,573.9 1176.4,604.7 1117.2,600.8 1121.7,590.1 1039.6,563.9"/></svg>
<div class="a" style="left:220px;top:628px;width:1141px;height:44px;background:#efefef;border-top:1px solid #d9d9d9"></div>
<div class="a" style="left:242px;top:637px;width:156px;height:29px;background:#3f9b53;border:1px solid #388a4a;border-radius:2px"></div>
<svg class="a" style="left:261px;top:647px" width="14" height="11" viewBox="0 0 14 11"><path fill="#fff" d="M0 5.8l2-2 3.2 3.2L12 0l2 2-8.8 9z"/></svg>
<div class="t" style="left:280.80px;transform-origin:0 0;top:643.00px;font-size:15px;line-height:15px;color:#fff;transform:scaleX(0.9647);">Создать бронь</div>
<div class="a" style="left:405px;top:641px;width:40px;height:20px;background:#d0d0d0;border-radius:10px"></div>
<div class="a" style="left:406px;top:642px;width:18px;height:18px;background:#fff;border-radius:50%"></div>
<div class="t" style="left:446.37px;transform-origin:0 0;top:644.00px;font-size:14px;line-height:14px;color:#111;transform:scaleX(0.9307);">В лист ожидания</div>
<div class="a" style="left:558px;top:638px;width:87px;height:26px;background:#f3f3f3;border:1px solid #e2e2e2;border-radius:2px"></div>
<div class="t" style="left:562.50px;transform-origin:0 0;top:644.00px;font-size:14px;line-height:14px;color:#cdcdcd;transform:scaleX(0.9277);">приоритет</div>
<svg class="a" style="left:634px;top:648px" width="6" height="4" viewBox="0 0 6 4"><path fill="#ccc" d="M0 0h6L3 4z"/></svg>
<div class="a" style="left:1252px;top:637px;width:93px;height:28px;background:#fff;border:1px solid #d2d2d2;border-radius:3px;box-shadow:0 1px 1px rgba(0,0,0,.15)"></div>
<div class="t" style="left:1270.70px;transform-origin:0 0;top:644.00px;font-size:15px;line-height:15px;color:#2f78c0;transform:scaleX(0.9714);">Закрыть</div>
</body></html>
